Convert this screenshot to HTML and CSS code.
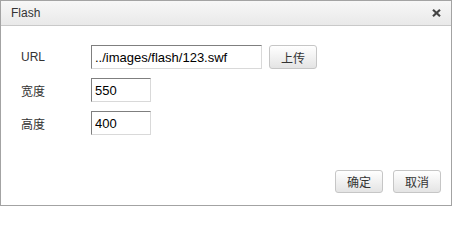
FILE: index.html
```html
<!DOCTYPE html>
<html>
<head>
<meta charset="utf-8">
<link rel="stylesheet" href="styles.css">
</head>
<body>
<div class="dialog">
  <div class="titlebar">
    <span class="title">Flash</span>
    <span class="close"><svg width="9" height="8" viewBox="0 0 9 8"><path d="M1 0.8 L8 7.2 M8 0.8 L1 7.2" stroke="#444" stroke-width="2.2"/></svg></span>
  </div>
  <div class="content">
    <div class="row">
      <span class="label">URL</span>
      <input class="field url" type="text" value="../images/flash/123.swf">
      <button class="btn upload">上传</button>
    </div>
    <div class="row">
      <span class="label">宽度</span>
      <input class="field small" type="text" value="550">
    </div>
    <div class="row">
      <span class="label">高度</span>
      <input class="field small" type="text" value="400">
    </div>
  </div>
  <div class="footer">
    <button class="btn">确定</button>
    <button class="btn">取消</button>
  </div>
</div>
</body>
</html>
```
FILE: styles.css
```css
html, body {
  margin: 0;
  padding: 0;
  background: #fff;
}
body {
  font-family: "Liberation Sans", "Noto Sans CJK SC", sans-serif;
  font-size: 12px;
  color: #333;
}
.dialog {
  box-sizing: border-box;
  width: 452px;
  height: 206px;
  border: 1px solid #a3a3a3;
  display: flex;
  flex-direction: column;
}
.titlebar {
  height: 24px;
  border-bottom: 1px solid #c9c9c9;
  background: linear-gradient(#f7f7f7, #e9e9e9);
  display: flex;
  align-items: center;
  justify-content: space-between;
  padding: 0 10px 0 10px;
}
.title {
  color: #333;
  font-size: 12px;
}
.close {
  display: flex;
  margin-right: 0;
}
.close svg {
  display: block;
}
.content {
  padding: 19px 0 0 20px;
  display: flex;
  flex-direction: column;
  gap: 9px;
}
.row {
  display: flex;
  align-items: center;
  height: 24px;
}
.label {
  width: 70px;
  color: #333;
}
.field {
  box-sizing: border-box;
  height: 24px;
  margin: 0;
  padding: 0 3px;
  border: 1px solid #d9d9d9;
  border-top-color: #7f7f7f;
  border-left-color: #7f7f7f;
  font-family: "Liberation Sans", "Noto Sans CJK SC", sans-serif;
  font-size: 13px;
  color: #000;
  outline: none;
}
.url {
  width: 171px;
}
.small {
  width: 60px;
}
.btn {
  box-sizing: border-box;
  width: 48px;
  height: 24px;
  margin: 0;
  padding: 0;
  border: 1px solid #c6c6c6;
  border-radius: 3px;
  background: linear-gradient(#ffffff, #e4e4e4);
  font-family: "Noto Sans CJK SC", sans-serif;
  font-size: 12px;
  color: #333;
}
.upload {
  margin-left: 7px;
}
.footer {
  margin-top: auto;
  display: flex;
  justify-content: flex-end;
  gap: 10px;
  padding: 0 10px 12px 0;
}
.footer .btn {
  height: 23px;
}
```
